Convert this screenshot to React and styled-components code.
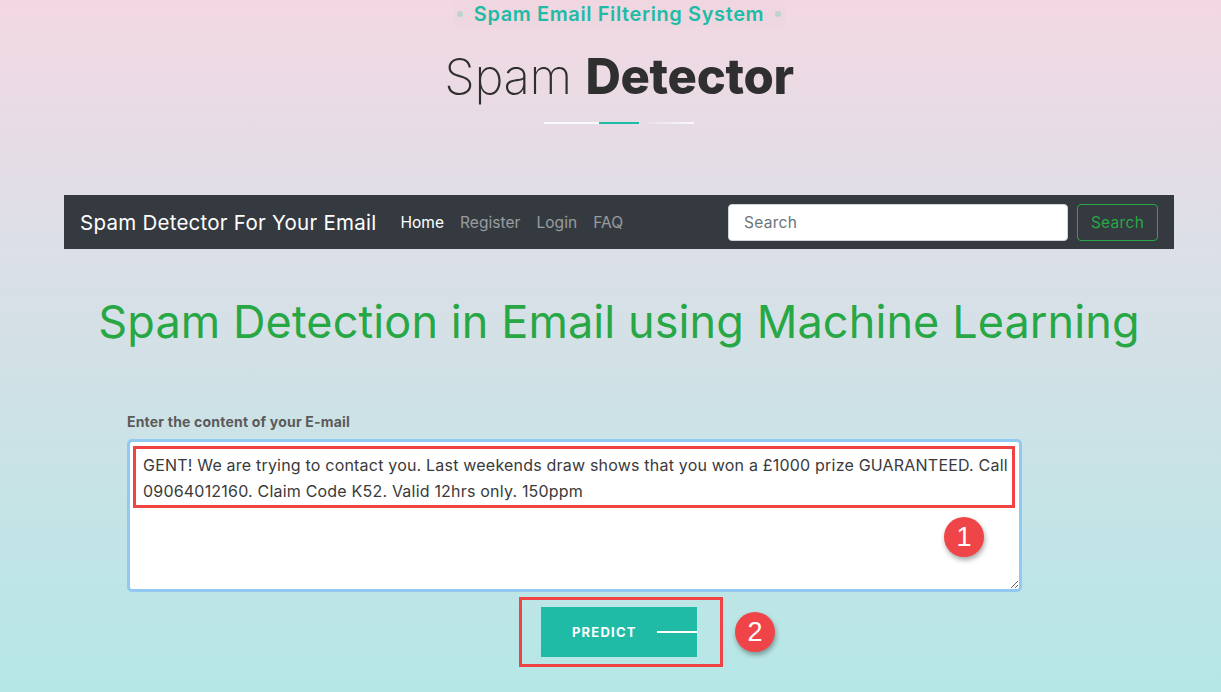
import React from "react";
import styled, { createGlobalStyle } from "styled-components";

const GlobalStyle = createGlobalStyle`
    html, body {
        margin: 0;
        padding: 0;
    }
    body {
        min-height: 692px;
        font-family: Inter, "Noto Sans", sans-serif;
        background: linear-gradient(180deg, #f3d8e3 0%, #dcdfe7 35%, #b5e7e6 100%);
        background-attachment: fixed;
        overflow: hidden;
    }
`;

const Page = styled.div`
    box-sizing: border-box;
    min-height: 692px;
    padding-left: 17px;
    display: flex;
    flex-direction: column;
    align-items: center;
`;

const Tagline = styled.div`
    display: flex;
    align-items: center;
    gap: 11px;
    height: 27px;
    padding: 0 4px;
    background: rgba(200, 180, 195, 0.06);
`;

const Dot = styled.span`
    width: 6px;
    height: 6px;
    border-radius: 50%;
    background: #bcd3d2;
`;

const TaglineText = styled.span`
    color: #1fbba6;
    font-weight: 600;
    font-size: 20px;
    letter-spacing: 0.6px;
`;

const Title = styled.h1`
    margin: 21px 0 0;
    font-size: 49px;
    line-height: 58px;
    color: #2f2f2f;
    font-weight: 200;
    letter-spacing: -0.3px;

    b {
        font-weight: 800;
    }
`;

const Underline = styled.div`
    display: flex;
    margin-top: 16px;
    height: 2px;
`;

const Seg = styled.span`
    width: ${(p) => p.w}px;
    background: ${(p) => p.bg};
`;

const NavBar = styled.nav`
    box-sizing: border-box;
    width: 1110px;
    height: 54px;
    margin-top: 71px;
    background: #343a40;
    display: flex;
    align-items: center;
    padding: 0 16px;
`;

const Brand = styled.span`
    color: #fff;
    font-size: 20.5px;
    letter-spacing: 0.25px;
    margin-right: 24px;
`;

const NavLinks = styled.div`
    display: flex;
    gap: 16px;
`;

const NavLink = styled.a`
    font-size: 15.5px;
    letter-spacing: 0.05px;
    color: ${(p) => (p.active ? "#fff" : "rgba(255,255,255,0.5)")};
    text-decoration: none;
`;

const SearchForm = styled.form`
    margin-left: auto;
    display: flex;
    gap: 9px;
`;

const SearchInput = styled.input`
    box-sizing: border-box;
    width: 340px;
    height: 37px;
    border: 1px solid #ced4da;
    border-radius: 4px;
    padding: 0 15px;
    font-family: inherit;
    font-size: 15.5px;
    letter-spacing: 0.3px;

    &::placeholder {
        color: #6c757d;
    }
`;

const SearchButton = styled.button`
    box-sizing: border-box;
    width: 81px;
    height: 37px;
    border: 1px solid #28a745;
    border-radius: 4px;
    background: transparent;
    color: #28a745;
    font-family: inherit;
    font-size: 15.5px;
    letter-spacing: 0.3px;
`;

const Heading = styled.h2`
    margin: 45px 0 0;
    font-size: 45px;
    line-height: 56px;
    font-weight: 400;
    letter-spacing: 0.1px;
    color: #28a745;
`;

const Form = styled.div`
    width: 1110px;
    box-sizing: border-box;
    padding-left: 63px;
    margin-top: 63px;
    display: flex;
    flex-direction: column;
`;

const Label = styled.label`
    font-size: 14px;
    font-weight: 700;
    letter-spacing: 0.2px;
    color: #5a5a5a;
    margin-bottom: 9px;
`;

const Field = styled.div`
    position: relative;
    width: 895px;
`;

const TextArea = styled.textarea`
    box-sizing: border-box;
    display: block;
    width: 895px;
    height: 153px;
    border: 3px solid #92c9f2;
    border-radius: 5px;
    padding: 10px 6px 10px 13px;
    font-family: inherit;
    font-size: 16px;
    letter-spacing: 0.2px;
    line-height: 26px;
    color: #3a3a3a;
    resize: vertical;
    outline: none;
`;

const Mark = styled.div`
    position: absolute;
    box-sizing: border-box;
    border: 3px solid #f04444;
`;

const Badge = styled.span`
    position: absolute;
    width: 40px;
    height: 40px;
    border-radius: 50%;
    background: #f04548;
    color: #fff;
    font-family: "Liberation Sans", Arial, sans-serif;
    font-size: 27px;
    display: flex;
    align-items: center;
    justify-content: center;
    box-shadow: 1px 3px 5px rgba(0, 0, 0, 0.35);
`;

const ButtonRow = styled.div`
    position: relative;
    display: flex;
    justify-content: center;
    margin-top: 15px;
    width: 1110px;
`;

const PredictButton = styled.button`
    width: 156px;
    height: 50px;
    border: none;
    background: #1fbba6;
    color: #fff;
    font-family: inherit;
    font-size: 13px;
    font-weight: 700;
    letter-spacing: 1.2px;
    display: flex;
    align-items: center;
    padding: 0 0 0 31px;
    gap: 20px;
`;

const Line = styled.span`
    flex: 1;
    height: 2px;
    background: #fff;
`;

export default function App() {
    return (
        <>
            <GlobalStyle />
            <Page>
                <Tagline>
                    <Dot />
                    <TaglineText>Spam Email Filtering System</TaglineText>
                    <Dot />
                </Tagline>
                <Title>
                    Spam <b>Detector</b>
                </Title>
                <Underline>
                    <Seg w={55} bg="#fafafa" />
                    <Seg w={40} bg="#1fbba6" />
                    <Seg w={55} bg="linear-gradient(90deg, #e4dde3, #fafafa)" />
                </Underline>
                <NavBar>
                    <Brand>Spam Detector For Your Email</Brand>
                    <NavLinks>
                        <NavLink active>Home</NavLink>
                        <NavLink>Register</NavLink>
                        <NavLink>Login</NavLink>
                        <NavLink>FAQ</NavLink>
                    </NavLinks>
                    <SearchForm>
                        <SearchInput placeholder="Search" />
                        <SearchButton type="button">Search</SearchButton>
                    </SearchForm>
                </NavBar>
                <Heading>Spam Detection in Email using Machine Learning</Heading>
                <Form>
                    <Label>Enter the content of your E-mail</Label>
                    <Field>
                        <TextArea
                            readOnly
                            defaultValue="GENT! We are trying to contact you. Last weekends draw shows that you won a £1000 prize GUARANTEED. Call 09064012160. Claim Code K52. Valid 12hrs only. 150ppm"
                        />
                        <Mark style={{ left: 6, top: 7, width: 882, height: 62 }} />
                        <Badge style={{ left: 817, top: 78 }}>1</Badge>
                    </Field>
                </Form>
                <ButtonRow>
                    <Mark style={{ left: 455, top: -10, width: 204, height: 70 }} />
                    <PredictButton type="button">
                        PREDICT
                        <Line />
                    </PredictButton>
                    <Badge style={{ left: 671, top: 5 }}>2</Badge>
                </ButtonRow>
            </Page>
        </>
    );
}
